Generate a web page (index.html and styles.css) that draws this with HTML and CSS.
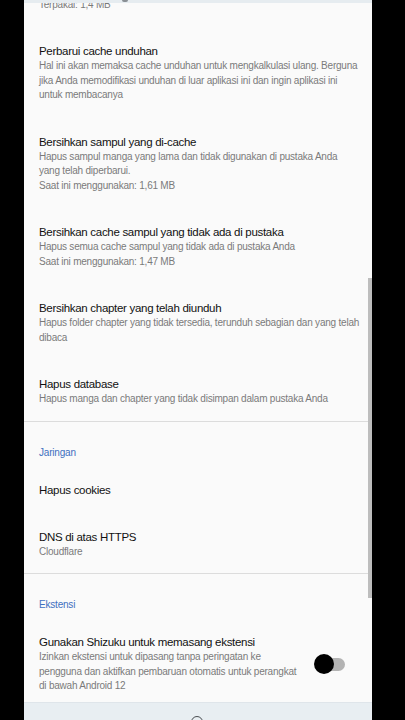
FILE: index.html
```html
<!DOCTYPE html>
<html lang="id">
<head>
<meta charset="utf-8">
<title>Pengaturan</title>
<link rel="stylesheet" href="styles.css">
</head>
<body>
<div class="screen">
  <div class="list">
    <div class="item partial">
      <div class="sub">Terpakai: 1,4 MB</div>
    </div>
    <div class="item">
      <div class="title">Perbarui cache unduhan</div>
      <div class="sub">Hal ini akan memaksa cache unduhan untuk mengkalkulasi ulang. Berguna<br>jika Anda memodifikasi unduhan di luar aplikasi ini dan ingin aplikasi ini<br>untuk membacanya</div>
    </div>
    <div class="item">
      <div class="title">Bersihkan sampul yang di-cache</div>
      <div class="sub">Hapus sampul manga yang lama dan tidak digunakan di pustaka Anda<br>yang telah diperbarui.<br>Saat ini menggunakan: 1,61 MB</div>
    </div>
    <div class="item">
      <div class="title">Bersihkan cache sampul yang tidak ada di pustaka</div>
      <div class="sub">Hapus semua cache sampul yang tidak ada di pustaka Anda<br>Saat ini menggunakan: 1,47 MB</div>
    </div>
    <div class="item">
      <div class="title">Bersihkan chapter yang telah diunduh</div>
      <div class="sub">Hapus folder chapter yang tidak tersedia, terunduh sebagian dan yang telah<br>dibaca</div>
    </div>
    <div class="item last">
      <div class="title">Hapus database</div>
      <div class="sub">Hapus manga dan chapter yang tidak disimpan dalam pustaka Anda</div>
    </div>
    <div class="divider"></div>
    <div class="category">Jaringan</div>
    <div class="item">
      <div class="title">Hapus cookies</div>
    </div>
    <div class="item last">
      <div class="title">DNS di atas HTTPS</div>
      <div class="sub">Cloudflare</div>
    </div>
    <div class="divider"></div>
    <div class="category">Ekstensi</div>
    <div class="item switch-item">
      <div class="text">
        <div class="title">Gunakan Shizuku untuk memasang ekstensi</div>
        <div class="sub">Izinkan ekstensi untuk dipasang tanpa peringatan ke<br>pengguna dan aktifkan pembaruan otomatis untuk perangkat<br>di bawah Android 12</div>
      </div>
      <div class="widget">
        <span class="switch"><span class="thumb"></span></span>
      </div>
    </div>
  </div>
  <div class="topbar"><span class="topicon"></span></div>
  <div class="bottombar"><span class="navicon"></span></div>
  <div class="scrollbar"></div>
</div>
</body>
</html>
```
FILE: styles.css
```css
html, body {
  margin: 0;
  padding: 0;
  background: #000;
}
body {
  width: 405px;
  height: 720px;
  overflow: hidden;
  font-family: "Liberation Sans", Arial, sans-serif;
}
.screen {
  position: relative;
  margin-left: 24px;
  width: 348px;
  height: 720px;
  background: #fafafa;
  overflow: hidden;
}
.list {
  display: flex;
  flex-direction: column;
}
.item {
  padding: 16px 15px 16px 15px;
}
.item.last {
  padding-bottom: 14px;
}
.item.partial {
  padding-top: 0;
  margin-top: -2.5px;
}
.title {
  font-size: 11.5px;
  line-height: 15px;
  color: #111;
  letter-spacing: -0.3px;
  white-space: nowrap;
}
.sub {
  font-size: 10px;
  line-height: 14.5px;
  color: #7a7a7a;
  letter-spacing: -0.22px;
  white-space: nowrap;
}
.divider {
  height: 1px;
  background: #dcdcdc;
}
.category {
  padding: 24px 15px 7px 15px;
  font-size: 10px;
  line-height: 14px;
  color: #3d6fc0;
  letter-spacing: -0.2px;
}
.switch-item {
  display: flex;
  align-items: center;
}
.switch-item .text {
  flex: 1;
  min-width: 0;
}
.widget {
  display: flex;
  align-items: center;
  margin-left: 17px;
  padding-left: 6.5px;
  padding-right: 12px;
}
.switch {
  position: relative;
  display: block;
  width: 25px;
  height: 13px;
  border-radius: 7px;
  background: #b3b3b3;
}
.thumb {
  position: absolute;
  left: -6.5px;
  top: -3.5px;
  width: 20px;
  height: 20px;
  border-radius: 50%;
  background: #000;
}
.topbar {
  position: absolute;
  left: 0;
  top: 0;
  width: 100%;
  height: 3px;
  background: #e6ecf0;
}
.topicon {
  position: absolute;
  left: 98px;
  top: 0;
  width: 6px;
  height: 2px;
  background: #8a8f94;
  border-radius: 0 0 2px 2px;
}
.bottombar {
  position: absolute;
  left: 0;
  bottom: 0;
  width: 100%;
  height: 17px;
  background: #e8eef2;
  border-top: 1px solid #dfe5ea;
}
.navicon {
  position: absolute;
  left: 167px;
  top: 13px;
  width: 12px;
  height: 12px;
  border-radius: 50%;
  border: 1.5px solid #4a4e52;
  box-sizing: border-box;
}
.scrollbar {
  position: absolute;
  right: 0;
  top: 278px;
  width: 4px;
  height: 320px;
  background: #bdbdbd;
}
```
